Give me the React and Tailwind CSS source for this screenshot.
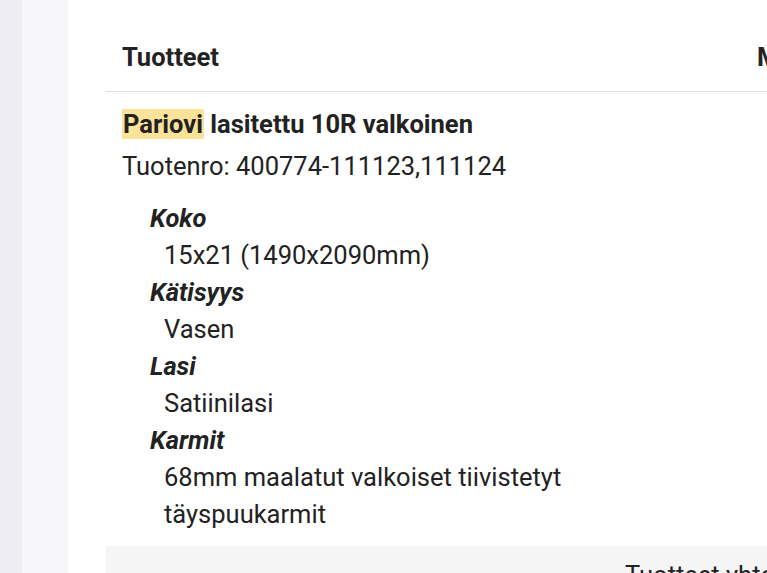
import React from "react";

const attrs = [
  ["Koko", ["15x21 (1490x2090mm)"]],
  ["Kätisyys", ["Vasen"]],
  ["Lasi", ["Satiinilasi"]],
  ["Karmit", ["68mm maalatut valkoiset tiivistetyt", "täyspuukarmit"]],
];

export default function App() {
  return (
    <div
      className="flex h-[573px] w-[767px] overflow-hidden bg-white text-[#222222]"
      style={{ fontFamily: "Roboto, 'Noto Sans', sans-serif" }}
    >
      <div className="w-[22px] shrink-0 bg-[#ededf3]" />
      <div className="w-[46px] shrink-0 bg-[#f7f6fb]" />
      <div className="flex-1 overflow-hidden pl-[38px]">
        <div className="w-[1000px]">
          <div className="flex border-b border-[#dedede] pt-[42px] pb-[19px] text-[25.5px] font-bold leading-[30px]">
            <div className="w-[635px] shrink-0 px-4">Tuotteet</div>
            <div className="px-4">Määrä</div>
          </div>
          <div className="flex">
            <div className="w-[635px] shrink-0 px-4 pt-[18px] pb-[13px]">
              <div className="text-[25.5px] font-bold leading-[28px]">
                <mark className="bg-[#fde39a] px-[1px] text-[#222222]">Pariovi</mark> lasitettu 10R valkoinen
              </div>
              <div className="mt-[10px] text-[25.5px] leading-[37px]">Tuotenro: 400774-111123,111124</div>
              <div className="mt-[15px] pl-[28px] text-[25.5px] leading-[37px]">
                {attrs.map(([k, vals]) => (
                  <div key={k}>
                    <div className="font-bold italic">{k}</div>
                    {vals.map((v) => (
                      <div key={v} className="pl-[14px]">{v}</div>
                    ))}
                  </div>
                ))}
              </div>
            </div>
          </div>
          <div className="flex bg-[#f5f5f5] pt-[14px] text-[25.5px] leading-[30px]">
            <div className="w-[519px] shrink-0" />
            <div>Tuotteet yhteensä</div>
          </div>
        </div>
      </div>
    </div>
  );
}
